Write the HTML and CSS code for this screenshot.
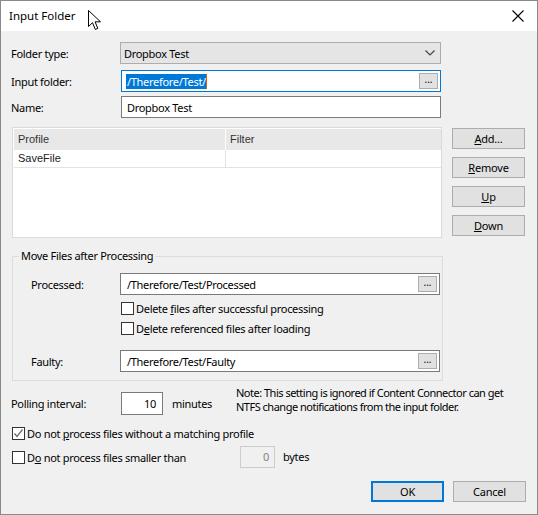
FILE: index.html
```html
<!DOCTYPE html>
<html>

<head>
	<title>Input Folder</title>
	<meta charset="utf-8">
	<link rel="stylesheet" href="styles.css">
</head>

<body>
	<div class="dialog">
		<div class="titlebar">
			<span class="title">Input Folder</span>
			<svg class="cursor" width="14" height="21" viewBox="0 0 14 21">
				<path d="M0.5 0.5 L0.5 16.5 L4.5 12.7 L7.3 19.5 L9.8 18.4 L7.1 11.8 L12.5 11.8 Z" fill="#fff" stroke="#000" stroke-width="1" />
			</svg>
			<svg class="close" width="12" height="12" viewBox="0 0 12 12">
				<path d="M0.5 0.5 L11.5 11.5 M11.5 0.5 L0.5 11.5" stroke="#000" stroke-width="1.1" />
			</svg>
		</div>

		<div class="content">
			<div class="row">
				<label class="lbl">Folder type:</label>
				<div class="combo">
					<span>Dropbox Test</span>
					<svg width="10" height="6" viewBox="0 0 10 6">
						<path d="M0.5 0.5 L5 5 L9.5 0.5" fill="none" stroke="#444" stroke-width="1.2" />
					</svg>
				</div>
			</div>
			<div class="row row-input">
				<label class="lbl">Input folder:</label>
				<div class="field focused">
					<span class="sel">/Therefore/Test/</span><span class="caret"></span>
					<span class="dots">...</span>
				</div>
			</div>
			<div class="row row-name">
				<label class="lbl">Name:</label>
				<div class="field">Dropbox Test</div>
			</div>

			<div class="profiles">
				<div class="list">
					<div class="lv-head">
						<span class="col1">Profile</span>
						<span class="col2">Filter</span>
					</div>
					<div class="lv-row">
						<span class="col1">SaveFile</span>
						<span class="col2"></span>
					</div>
				</div>
				<div class="side">
					<button class="btn"><u>A</u>dd...</button>
					<button class="btn"><u>R</u>emove</button>
					<button class="btn"><u>U</u>p</button>
					<button class="btn"><u>D</u>own</button>
				</div>
			</div>

			<fieldset class="group">
				<legend>Move Files after Processing</legend>
				<div class="grow">
					<label class="glbl">Processed:</label>
					<div class="field gfield"><span>/Therefore/Test/Processed</span><span class="dots">...</span></div>
				</div>
				<div class="chkrow indent">
					<span class="box"></span><span>Delete <u>f</u>iles after successful processing</span>
				</div>
				<div class="chkrow indent">
					<span class="box"></span><span>D<u>e</u>lete referenced files after loading</span>
				</div>
				<div class="grow faulty">
					<label class="glbl">Faulty:</label>
					<div class="field gfield"><span>/Therefore/Test/Faulty</span><span class="dots">...</span></div>
				</div>
			</fieldset>

			<div class="polling">
				<label class="plbl">Polling interval:</label>
				<div class="num">10</div>
				<span class="unit">minutes</span>
				<p class="note">Note: This setting is ignored if Content Connector can get<br>NTFS change notifications from the input folder.</p>
			</div>

			<div class="chkrow first">
				<span class="box">
					<svg width="11" height="11" viewBox="0 0 11 11">
						<path d="M1.5 5.5 L4 8.5 L9.5 1.5" fill="none" stroke="#6d6d6d" stroke-width="1.3" />
					</svg>
				</span><span>Do not <u>p</u>rocess files without a matching profile</span>
			</div>
			<div class="chkrow second">
				<span class="box"></span><span class="small-text">D<u>o</u> not process files smaller than</span>
				<div class="num off">0</div>
				<span class="unit">bytes</span>
			</div>

			<div class="footer">
				<button class="btn ok">OK</button>
				<button class="btn">Cancel</button>
			</div>
		</div>
	</div>
</body>

</html>
```

FILE: styles.css
```css
body {
	margin: 0;
	padding: 0;
	font-family: "Noto Sans", sans-serif;
	font-size: 11px;
	letter-spacing: -0.3px;
	color: #000;
}

.dialog {
	width: 538px;
	height: 515px;
	box-sizing: border-box;
	border: 1px solid #8a8a8a;
	background-color: #f0f0f0;
}

.titlebar {
	height: 30px;
	background-color: #fff;
	display: flex;
	align-items: center;
	padding-left: 8px;
	padding-right: 13px;
	position: relative;
}

.title {
	flex: 1;
	font-size: 11.5px;
	letter-spacing: 0;
	margin-top: -1px;
}

.cursor {
	position: absolute;
	left: 87px;
	top: 9px;
}

.close {
	margin-top: -1px;
}

.content {
	padding: 11px 11px 0 10px;
	white-space: nowrap;
}

/* top rows */
.row {
	display: flex;
	align-items: center;
	height: 22px;
}

.row-input {
	margin-top: 6px;
}

.row-name {
	margin-top: 4px;
}

.lbl {
	width: 110px;
	flex-shrink: 0;
}

.combo {
	width: 321px;
	height: 22px;
	box-sizing: border-box;
	margin-left: -1px;
	border: 1px solid #adadad;
	background-color: #e5e5e5;
	display: flex;
	align-items: center;
	justify-content: space-between;
	padding: 0 5px 0 3px;
}

.field {
	width: 320px;
	height: 22px;
	box-sizing: border-box;
	border: 1px solid #7a7a7a;
	background-color: #fff;
	display: flex;
	align-items: center;
	padding-left: 5px;
}

.focused {
	border-color: #0078d7;
}

.sel {
	background-color: #0078d7;
	color: #fff;
	line-height: 15px;
	padding-left: 1px;
	margin-left: -1px;
}

.caret {
	width: 1px;
	height: 15px;
	background-color: #c8640a;
}

.dots {
	margin-left: auto;
	margin-right: 2px;
	width: 17px;
	height: 14px;
	border: 1px solid #adadad;
	background-color: #e1e1e1;
	font-size: 10px;
	line-height: 11px;
	text-align: center;
	letter-spacing: 0;
}

/* profile list */
.profiles {
	display: flex;
	margin-top: 9px;
}

.list {
	width: 430px;
	height: 111px;
	box-sizing: border-box;
	margin-left: 1px;
	border: 1px solid #dadada;
	background-color: #fff;
	padding: 1px 0 0 1px;
	font-family: "Liberation Sans", sans-serif;
	font-size: 11px;
	letter-spacing: 0;
}

.lv-head,
.lv-row {
	display: flex;
}

.lv-head {
	height: 21px;
	background-color: #e8e8e8;
	color: #333;
	line-height: 21px;
}

.lv-row {
	height: 17px;
	line-height: 17px;
	border-bottom: 1px solid #e3e3e3;
	color: #222;
}

.col1 {
	width: 207px;
	padding-left: 4px;
	border-right: 1px solid #e3e3e3;
}

.lv-head .col1 {
	border-right: 1px solid #fff;
}

.col2 {
	padding-left: 4px;
}

.side {
	display: flex;
	flex-direction: column;
	gap: 8px;
	margin-left: 10px;
	padding-top: 1px;
}

.btn {
	width: 73px;
	height: 21px;
	box-sizing: border-box;
	border: 1px solid #adadad;
	background-color: #e1e1e1;
	font-family: "Noto Sans", sans-serif;
	font-size: 11px;
	letter-spacing: -0.2px;
	padding: 0;
	color: #000;
}

/* group box */
.group {
	margin: 10px 0 0 1px;
	width: 431px;
	box-sizing: border-box;
	border: 1px solid #dcdcdc;
	padding: 0 0 8px 0;
}

.group legend {
	margin-left: 6px;
	padding: 0 2px;
	line-height: 16px;
}

.grow {
	display: flex;
	align-items: center;
	margin-top: 9px;
	padding-left: 18px;
}

.glbl {
	width: 89px;
}

.gfield {
	padding-left: 6px;
}

.faulty {
	margin-top: 12px;
}

.chkrow {
	display: flex;
	align-items: center;
	height: 20px;
}

.indent {
	padding-left: 108px;
}

.box {
	width: 13px;
	height: 13px;
	box-sizing: border-box;
	border: 1px solid #333;
	background-color: #fff;
	margin-right: 2px;
	display: flex;
	align-items: center;
	justify-content: center;
	flex-shrink: 0;
}

.grow + .chkrow {
	margin-top: 3px;
}

/* polling */
.polling {
	display: flex;
	align-items: flex-start;
	margin-top: 5px;
}

.plbl {
	width: 110px;
	flex-shrink: 0;
	margin-top: 10px;
	line-height: 16px;
}

.num {
	width: 42px;
	height: 23px;
	box-sizing: border-box;
	border: 1px solid #7a7a7a;
	background-color: #fff;
	margin-top: 6px;
	text-align: right;
	padding-right: 6px;
	line-height: 21px;
	flex-shrink: 0;
}

.unit {
	margin-left: 9px;
	margin-top: 10px;
	line-height: 16px;
}

.polling .unit {
	width: 64px;
	flex-shrink: 0;
}

.note {
	margin: 0;
	line-height: 14px;
	letter-spacing: -0.5px;
}

.chkrow.first {
	margin-top: 8px;
	padding-left: 1px;
}

.chkrow.second {
	margin-top: 4px;
	padding-left: 1px;
}

.small-text {
	width: 213px;
	flex-shrink: 0;
}

.num.off {
	margin: 0;
	width: 35px;
	height: 22px;
	border-color: #cccccc;
	background-color: #f0f0f0;
	color: #838383;
	padding-right: 5px;
	line-height: 20px;
}

.second .unit {
	margin: 0 0 0 8px;
}

.footer {
	display: flex;
	justify-content: flex-end;
	gap: 9px;
	margin-top: 14px;
}

.ok {
	border: 2px solid #0078d7;
}
```
